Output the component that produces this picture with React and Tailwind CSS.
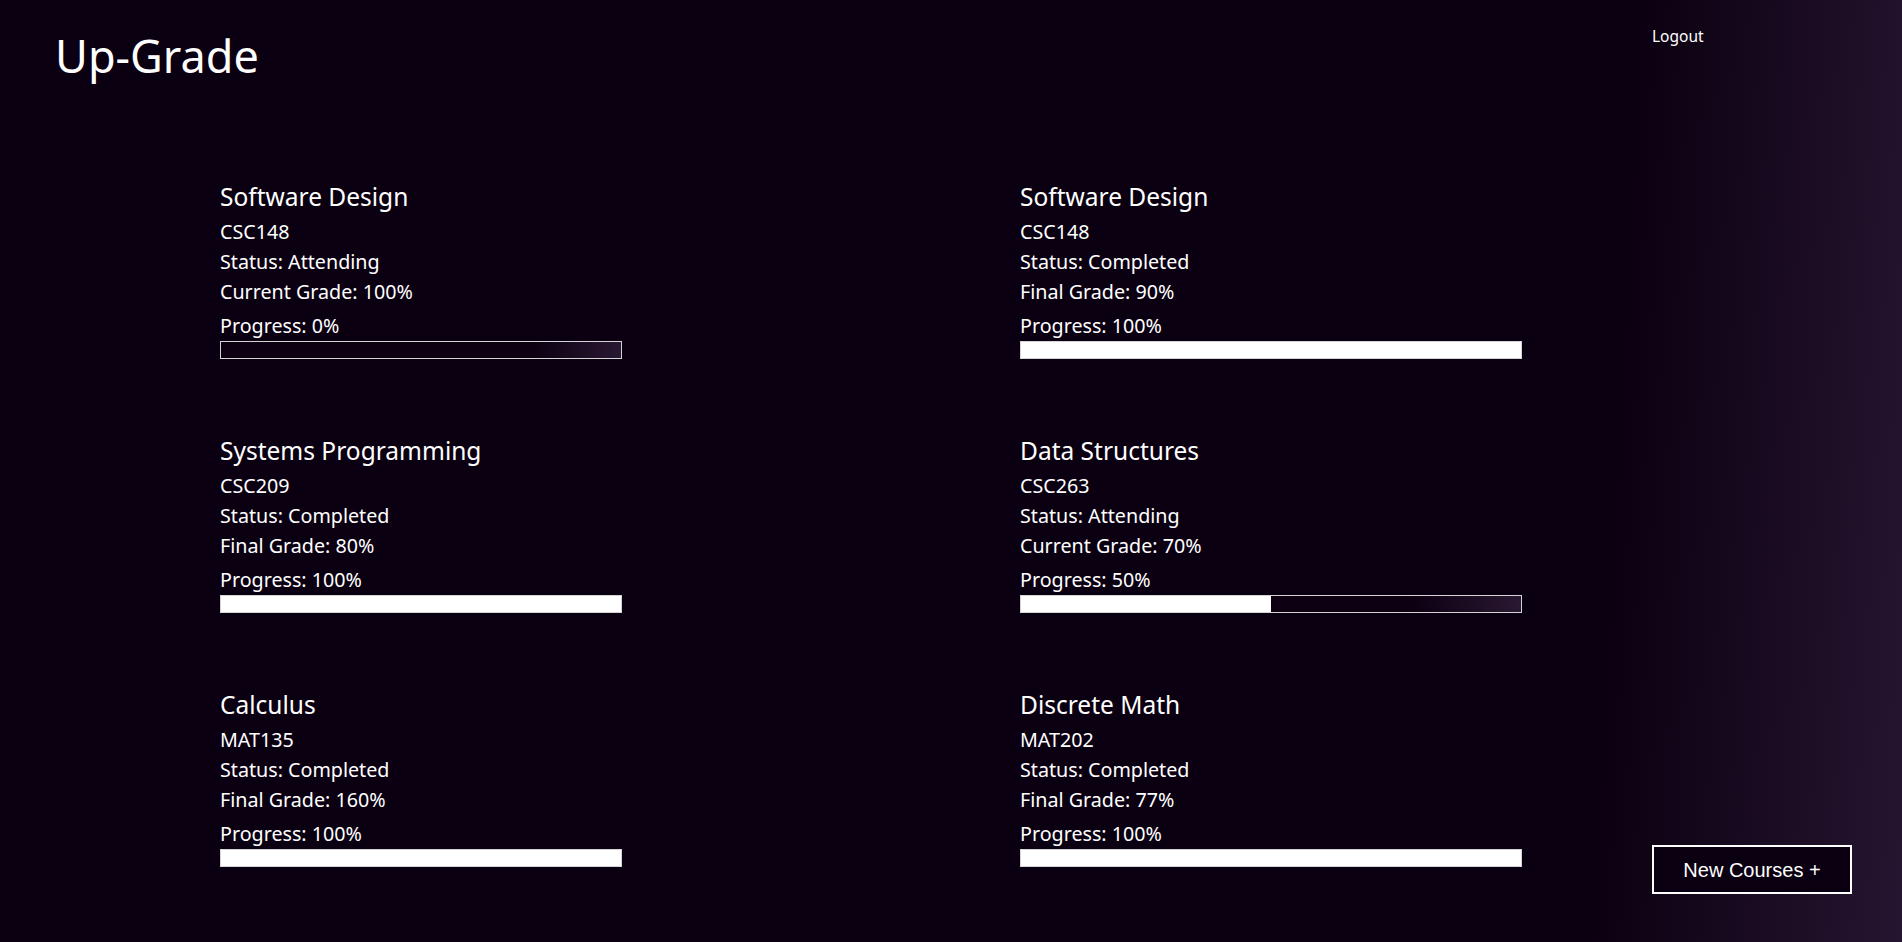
import React from "react";

const courses = [
  { title: "Software Design", code: "CSC148", status: "Attending", grade: "Current Grade: 100%", progress: 0 },
  { title: "Software Design", code: "CSC148", status: "Completed", grade: "Final Grade: 90%", progress: 100 },
  { title: "Systems Programming", code: "CSC209", status: "Completed", grade: "Final Grade: 80%", progress: 100 },
  { title: "Data Structures", code: "CSC263", status: "Attending", grade: "Current Grade: 70%", progress: 50 },
  { title: "Calculus", code: "MAT135", status: "Completed", grade: "Final Grade: 160%", progress: 100 },
  { title: "Discrete Math", code: "MAT202", status: "Completed", grade: "Final Grade: 77%", progress: 100 },
];

const CourseCard = ({ course, wide }) => {
  return (
    <div className="flex flex-col">
      <h2 className="text-[24.5px] leading-[36px] font-normal">{course.title}</h2>
      <p className="mt-[2px] text-[19.7px] leading-[30px]">{course.code}</p>
      <p className="text-[19.7px] leading-[30px]">Status: {course.status}</p>
      <p className="text-[19.7px] leading-[30px]">{course.grade}</p>
      <p className="mt-[5px] text-[19.7px] leading-[28px]">Progress: {course.progress}%</p>
      <div
        className={
          (wide ? "w-[502px]" : "w-[402px]") +
          " mt-[1px] h-[18px] border border-[#d4d4d4] bg-[linear-gradient(90deg,#0c0012_78%,#2a1832)]"
        }
      >
        <div className="h-full bg-white" style={{ width: `${course.progress}%` }}></div>
      </div>
    </div>
  );
};

export default function App() {
  return (
    <div className="min-h-screen flex text-white bg-[linear-gradient(93deg,#0b0011_84%,#261530)] font-['Noto_Sans',sans-serif]">
      {/* main area */}
      <div className="flex-1 flex flex-col">
        <h1 className="pl-[55px] pt-[26px] text-[45px] leading-[60px] font-normal">Up-Grade</h1>

        <div className="mt-[93px] pl-[220px] grid grid-cols-[800px_1fr] gap-y-[74px]">
          {courses.map((c, i) => (
            <CourseCard key={i} course={c} wide={i % 2 === 1} />
          ))}
        </div>
      </div>

      {/* right side */}
      <div className="w-[200px] mr-[50px] flex flex-col justify-between items-start pt-[26px] pb-[48px]">
        <a className="text-[15.5px] leading-[20px] cursor-pointer">Logout</a>
        <button className="w-[200px] h-[49px] border-2 border-white bg-[#0b0011] text-[20px] text-white font-['Liberation_Sans',sans-serif]">
          New Courses +
        </button>
      </div>
    </div>
  );
}
